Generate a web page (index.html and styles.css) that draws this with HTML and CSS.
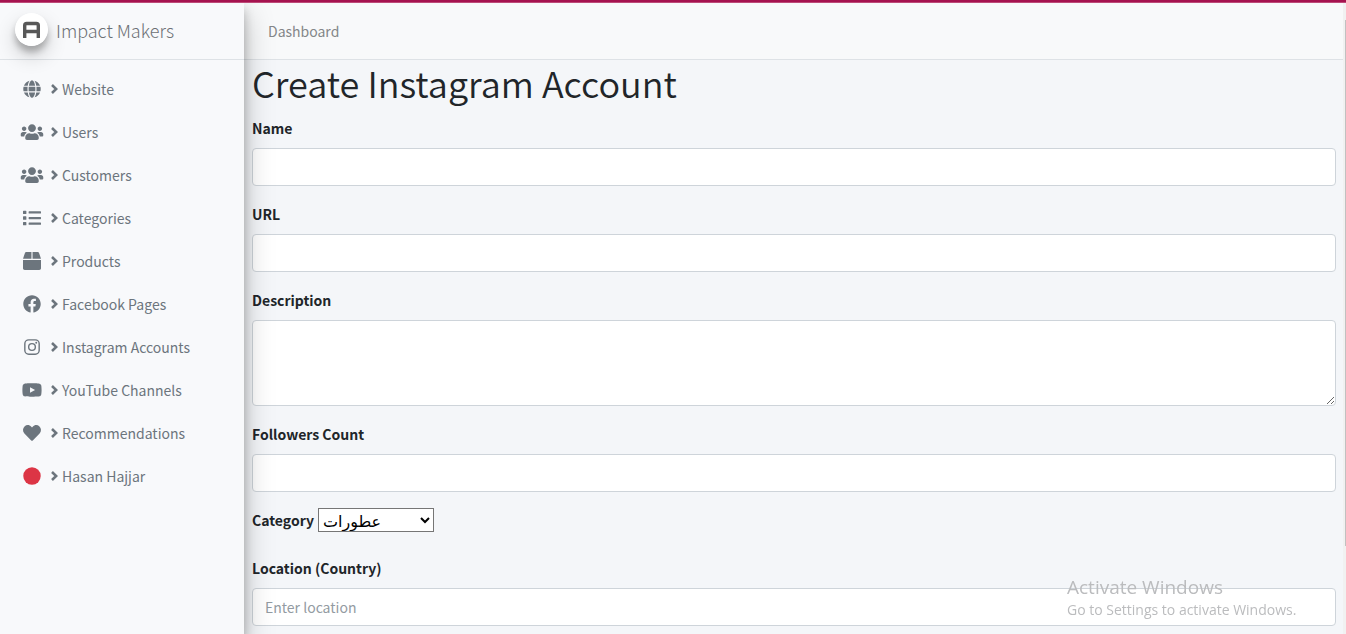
FILE: index.html
```html
<!DOCTYPE html>
<html lang="en">
<head>
<meta charset="utf-8">
<title>Create Instagram Account</title>
<link rel="stylesheet" href="styles.css">
</head>
<body>
<svg class="sprite" aria-hidden="true">
  <symbol id="globe" viewBox="0 0 496 512"><path d="M336.5 160C322 70.7 287.8 8 248 8s-74 62.7-88.5 152h177zM152 256c0 22.2 1.2 43.5 3.3 64h185.3c2.1-20.5 3.3-41.8 3.3-64s-1.2-43.5-3.3-64H155.3c-2.1 20.5-3.3 41.8-3.3 64zm324.7-96c-28.6-67.9-86.5-120.4-158-141.6 24.4 33.8 41.2 84.7 50 141.6h108zM177.2 18.4C105.8 39.6 47.8 92.1 19.3 160h108c8.7-56.9 25.5-107.8 49.9-141.6zM487.4 192H372.7c2.1 21 3.3 42.5 3.3 64s-1.2 43-3.3 64h114.6c5.5-20.5 8.6-41.8 8.6-64s-3.1-43.5-8.5-64zM120 256c0-21.5 1.2-43 3.3-64H8.6C3.2 212.5 0 233.8 0 256s3.2 43.5 8.6 64h114.6c-2-21-3.2-42.5-3.2-64zm39.5 96c14.5 89.3 48.7 152 88.5 152s74-62.7 88.5-152h-177zm159.3 141.6c71.4-21.2 129.4-73.7 158-141.6h-108c-8.8 56.9-25.6 107.8-50 141.6zM19.3 352c28.6 67.9 86.5 120.4 158 141.6-24.4-33.8-41.2-84.7-50-141.6h-108z"/></symbol>
  <symbol id="users" viewBox="0 0 640 512"><path d="M96 224c35.3 0 64-28.7 64-64s-28.7-64-64-64-64 28.7-64 64 28.7 64 64 64zm448 0c35.3 0 64-28.7 64-64s-28.7-64-64-64-64 28.7-64 64 28.7 64 64 64zm32 32h-64c-17.6 0-33.5 7.1-45.1 18.6 40.3 22.1 68.9 62 75.1 109.4h66c17.7 0 32-14.3 32-32v-32c0-35.3-28.7-64-64-64zm-256 0c61.9 0 112-50.1 112-112S381.9 32 320 32 208 82.1 208 144s50.1 112 112 112zm76.8 32h-8.3c-20.8 10-43.9 16-68.5 16s-47.6-6-68.5-16h-8.3C179.6 288 128 339.6 128 403.2V432c0 26.5 21.5 48 48 48h288c26.5 0 48-21.5 48-48v-28.8c0-63.6-51.6-115.2-115.2-115.2zm-223.7-13.4C161.5 263.1 145.6 256 128 256H64c-35.3 0-64 28.7-64 64v32c0 17.7 14.3 32 32 32h65.9c6.3-47.4 34.9-87.3 75.2-109.4z"/></symbol>
  <symbol id="list" viewBox="0 0 512 512"><path d="M16 48h64a16 16 0 0 1 16 16v64a16 16 0 0 1-16 16H16a16 16 0 0 1-16-16V64a16 16 0 0 1 16-16zm0 160h64a16 16 0 0 1 16 16v64a16 16 0 0 1-16 16H16a16 16 0 0 1-16-16v-64a16 16 0 0 1 16-16zm0 160h64a16 16 0 0 1 16 16v64a16 16 0 0 1-16 16H16a16 16 0 0 1-16-16v-64a16 16 0 0 1 16-16zM176 64h320a16 16 0 0 1 16 16v32a16 16 0 0 1-16 16H176a16 16 0 0 1-16-16V80a16 16 0 0 1 16-16zm0 160h320a16 16 0 0 1 16 16v32a16 16 0 0 1-16 16H176a16 16 0 0 1-16-16v-32a16 16 0 0 1 16-16zm0 160h320a16 16 0 0 1 16 16v32a16 16 0 0 1-16 16H176a16 16 0 0 1-16-16v-32a16 16 0 0 1 16-16z"/></symbol>
  <symbol id="box" viewBox="0 0 512 512"><path d="M509.5 184.6L458.9 32.8C452.4 13.2 434.1 0 413.4 0H272v192h238.7c-.4-2.5-.4-5-1.2-7.4zM240 0H98.6c-20.7 0-39 13.2-45.5 32.8L2.5 184.6c-.8 2.4-.8 4.9-1.2 7.4H240V0zM0 224v240c0 26.5 21.5 48 48 48h416c26.5 0 48-21.5 48-48V224H0z"/></symbol>
  <symbol id="facebook" viewBox="0 0 512 512"><path d="M504 256C504 119 393 8 256 8S8 119 8 256c0 123.78 90.69 226.38 209.25 245V327.69h-63V256h63v-54.64c0-62.15 37-96.48 93.67-96.48 27.14 0 55.52 4.84 55.52 4.84v61h-31.28c-30.8 0-40.41 19.12-40.41 38.73V256h68.78l-11 71.69h-57.78V501C413.31 482.38 504 379.78 504 256z"/></symbol>
  <symbol id="instagram" viewBox="0 0 448 512"><rect x="20" y="52" width="408" height="408" rx="112" fill="none" stroke="currentColor" stroke-width="40"/><circle cx="224" cy="256" r="95" fill="none" stroke="currentColor" stroke-width="40"/><circle cx="344" cy="136" r="27"/></symbol>
  <symbol id="youtube" viewBox="0 0 576 512"><path d="M549.655 124.083c-6.281-23.65-24.787-42.276-48.284-48.597C458.781 64 288 64 288 64S117.22 64 74.629 75.486c-23.497 6.322-42.003 24.947-48.284 48.597-11.412 42.867-11.412 132.305-11.412 132.305s0 89.438 11.412 132.305c6.281 23.65 24.787 41.5 48.284 47.821C117.22 448 288 448 288 448s170.78 0 213.371-11.486c23.497-6.321 42.003-24.171 48.284-47.821 11.412-42.867 11.412-132.305 11.412-132.305s0-89.438-11.412-132.305zm-317.51 213.508V175.185l142.739 81.205-142.739 81.201z"/></symbol>
  <symbol id="heart" viewBox="0 0 512 512"><path d="M462.3 62.6C407.5 15.9 326 24.3 275.7 76.2L256 96.5l-19.7-20.3C186.1 24.3 104.5 15.9 49.7 62.6c-62.8 53.6-66.1 149.8-9.9 207.9l193.5 199.8c12.5 12.9 32.8 12.9 45.3 0l193.5-199.8c56.3-58.1 53-154.3-9.8-207.9z"/></symbol>
  <symbol id="circle" viewBox="0 0 512 512"><circle cx="256" cy="256" r="248"/></symbol>
  <symbol id="angle" viewBox="0 0 8 10"><path d="M2 1 6.200 5 2 9" fill="none" stroke="currentColor" stroke-width="2.6"/></symbol>
</svg>
<div class="progress"></div>
<div class="wrapper">
  <aside class="sidebar">
    <a class="brand" href="#">
      <svg class="logo" viewBox="0 0 33 33" aria-hidden="true"><circle cx="16.500" cy="16.500" r="16.500" fill="#fff"/><path d="M9.700 25V12.500Q9.700 10.500 11.700 10.500H21.300Q23.300 10.500 23.300 12.500V25M9.700 18.500H23.300" fill="none" stroke="#585858" stroke-width="3.400"/></svg>
      <span>Impact Makers</span>
    </a>
    <nav>
      <ul class="menu">
        <li><a href="#"><svg class="icon"><use href="#globe"/></svg><svg class="angle"><use href="#angle"/></svg><span>Website</span></a></li>
        <li><a href="#"><svg class="icon"><use href="#users"/></svg><svg class="angle"><use href="#angle"/></svg><span>Users</span></a></li>
        <li><a href="#"><svg class="icon"><use href="#users"/></svg><svg class="angle"><use href="#angle"/></svg><span>Customers</span></a></li>
        <li><a href="#"><svg class="icon"><use href="#list"/></svg><svg class="angle"><use href="#angle"/></svg><span>Categories</span></a></li>
        <li><a href="#"><svg class="icon"><use href="#box"/></svg><svg class="angle"><use href="#angle"/></svg><span>Products</span></a></li>
        <li><a href="#"><svg class="icon"><use href="#facebook"/></svg><svg class="angle"><use href="#angle"/></svg><span>Facebook Pages</span></a></li>
        <li><a href="#"><svg class="icon"><use href="#instagram"/></svg><svg class="angle"><use href="#angle"/></svg><span>Instagram Accounts</span></a></li>
        <li><a href="#"><svg class="icon"><use href="#youtube"/></svg><svg class="angle"><use href="#angle"/></svg><span>YouTube Channels</span></a></li>
        <li><a href="#"><svg class="icon"><use href="#heart"/></svg><svg class="angle"><use href="#angle"/></svg><span>Recommendations</span></a></li>
        <li><a href="#"><svg class="icon danger"><use href="#circle"/></svg><svg class="angle"><use href="#angle"/></svg><span>Hasan Hajjar</span></a></li>
      </ul>
    </nav>
  </aside>
  <div class="page">
    <header class="navbar"><a href="#">Dashboard</a></header>
    <main class="content">
      <h1>Create Instagram Account</h1>
      <form>
        <div class="group"><label for="name">Name</label><input class="control" id="name" type="text"></div>
        <div class="group"><label for="url">URL</label><input class="control" id="url" type="text"></div>
        <div class="group"><label for="description">Description</label><textarea class="control area" id="description"></textarea></div>
        <div class="group"><label for="followers">Followers Count</label><input class="control" id="followers" type="text"></div>
        <div class="group inline"><label for="category">Category</label><select id="category"><option>عطورات</option></select></div>
        <div class="group"><label for="location">Location (Country)</label><input class="control" id="location" type="text" placeholder="Enter location"></div>
      </form>
    </main>
  </div>
  <div class="track"><div class="thumb"></div></div>
</div>
<div class="watermark"><p class="mark-title">Activate Windows</p><p class="mark-text">Go to Settings to activate Windows.</p></div>
</body>
</html>
```
FILE: styles.css
```css
* { box-sizing: border-box; }
body {
  margin: 0;
  font-family: "Noto Sans CJK SC", "Noto Sans", sans-serif;
  font-size: 14px;
  line-height: 24px;
  color: #212529;
  background: #f4f6f9;
}
a { text-decoration: none; }
.sprite { display: none; }
.progress {
  position: fixed;
  top: 0;
  left: 0;
  right: 0;
  z-index: 5;
  height: 3px;
  background: #a5134f;
  border-bottom: 1px solid #bd4a78;
}
.wrapper { display: flex; min-height: 100vh; }
.sidebar {
  position: relative;
  z-index: 2;
  flex: 0 0 244px;
  background: #f8f9fb;
  box-shadow: 0 14px 28px rgba(0, 0, 0, .25), 0 10px 10px rgba(0, 0, 0, .22);
}
.brand {
  display: flex;
  align-items: center;
  gap: 8px;
  height: 60px;
  padding: 0 15px;
  border-bottom: 1px solid #dee2e6;
  color: #6c7075;
  font-size: 18px;
  font-weight: 300;
}
.logo {
  width: 33px;
  height: 33px;
  border-radius: 50%;
  box-shadow: 0 10px 20px rgba(0, 0, 0, .19), 0 6px 6px rgba(0, 0, 0, .23);
}
.menu { list-style: none; margin: 0; padding: 7px 8px; }
.menu a {
  display: flex;
  align-items: center;
  height: 43px;
  padding-left: 11px;
  color: #6c757d;
}
.icon { width: 26px; height: 18px; margin-right: 5px; fill: currentColor; }
.angle { width: 8px; height: 10px; margin-right: 4px; }
.danger { color: #dc3545; }
.page { flex: 1; min-width: 0; }
.navbar {
  display: flex;
  align-items: center;
  height: 60px;
  padding: 3px 24px 0;
  background: #f8f9fa;
  border-bottom: 1px solid #dee2e6;
}
.navbar a { color: #848789; }
.content { padding: 0 7px 8px 8px; }
h1 { margin: 0 0 12px; font-size: 36px; line-height: 44px; font-weight: 350; }
.group { margin-bottom: 16px; }
.group:last-child { margin-bottom: 0; }
label { display: block; margin-bottom: 8px; font-weight: 700; }
.control {
  display: block;
  width: 100%;
  height: 38px;
  padding: 6px 12px;
  border: 1px solid #ced4da;
  border-radius: 4px;
  background: #fff;
  font: inherit;
  color: #495057;
}
.control::placeholder { color: #939ba2; opacity: 1; }
.area { height: 86px; resize: vertical; }
.inline { display: flex; align-items: flex-start; gap: 4px; }
select {
  width: 116px;
  height: 24px;
  padding: 0;
  border: 1px solid #767676;
  background: #fff;
  color: #000;
  font-family: "Noto Sans", "DejaVu Sans", sans-serif;
  font-size: 16px;
}
.track { flex: 0 0 3px; padding-top: 20px; background: #f1f1f1; }
.thumb { height: 526px; margin-left: 2px; background: #c1c1c1; }
.watermark {
  position: fixed;
  right: 43px;
  bottom: 13px;
  z-index: 4;
  width: 236px;
  color: #bbbcbe;
  font-family: "Open Sans", sans-serif;
  pointer-events: none;
  white-space: nowrap;
}
.watermark p { margin: 0; }
.mark-title { font-size: 19px; }
.mark-text { font-size: 14px; line-height: 22px; }
```
